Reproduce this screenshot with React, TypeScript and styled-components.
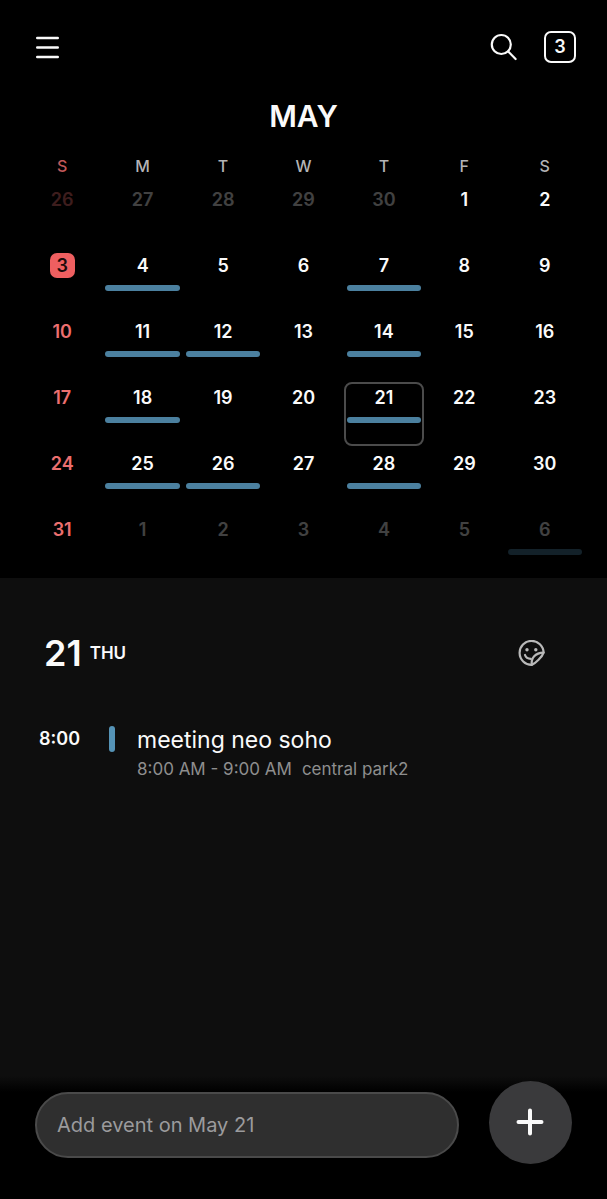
import React, { useState } from "react";
import styled, { createGlobalStyle } from "styled-components";

const GlobalStyle = createGlobalStyle`
  *, *::before, *::after { box-sizing: border-box; }
  html, body { margin: 0; padding: 0; background: #000; }
  body, button, input {
    font-family: Inter, "Liberation Sans", sans-serif;
  }
  button { margin: 0; padding: 0; border: 0; background: none; color: inherit; cursor: pointer; }
`;

const Page = styled.div`
  display: flex;
  flex-direction: column;
  min-height: 100vh;
  background: #000;
  color: #fafafa;
`;

const TopBar = styled.header`
  display: flex;
  align-items: center;
  justify-content: space-between;
  height: 94px;
  padding: 0 31px 0 36px;
`;

const Actions = styled.div`
  display: flex;
  align-items: center;
  gap: 26px;
`;

const IconButton = styled.button`
  display: flex;
  align-items: center;
  justify-content: center;
  color: ${(p) => p.color || "#fafafa"};
`;

const TodayButton = styled.button`
  width: 32px;
  height: 32px;
  border: 2px solid #fafafa;
  border-radius: 7px;
  font-size: 18px;
  line-height: 28px;
  font-weight: 600;
  text-align: center;
`;

const MonthTitle = styled.h1`
  margin: 0;
  height: 60px;
  font-size: 30px;
  line-height: 44px;
  font-weight: 600;
  text-align: center;
`;

const CalendarArea = styled.section`
  padding: 0 22px;
`;

const Calendar = styled.table`
  width: 100%;
  table-layout: fixed;
  border-collapse: collapse;
`;

const Weekday = styled.th<{ $sunday?: boolean }>`
  height: 30px;
  padding: 0;
  vertical-align: top;
  font-size: 16px;
  line-height: 24px;
  font-weight: 500;
  color: ${(p) => (p.$sunday ? "#c2595a" : "#b4b4b6")};
`;

const DayCell = styled.td`
  height: 66px;
  padding: 0;
  vertical-align: top;

  tr:last-child > & { height: 64px; }
`;

const DayButton = styled.button<{ $selected: boolean; $outside: boolean }>`
  display: flex;
  flex-direction: column;
  align-items: stretch;
  width: 100%;
  height: 64px;
  padding: 1px;
  border: 2px solid ${(p) => (p.$selected ? "#4b4b4b" : "transparent")};
  border-radius: 8px;
  opacity: ${(p) => (p.$outside ? 0.26 : 1)};
`;

const DayNumber = styled.span<{ $sunday: boolean; $today: boolean }>`
  align-self: center;
  width: 25px;
  height: 25px;
  border-radius: 7px;
  font-size: 18px;
  line-height: 25px;
  font-weight: 600;
  text-align: center;
  color: ${(p) => (p.$today ? "#1c0a0a" : p.$sunday ? "#ec6f6f" : "#fafafa")};
  background: ${(p) => (p.$today ? "#ee5f60" : "transparent")};
`;

const EventBar = styled.span`
  height: 6px;
  margin-top: 7px;
  border-radius: 3px;
  background: #4b809f;
`;

const Agenda = styled.main`
  flex: 1;
  padding: 50px 62px 24px 39px;
  background: #0e0e0e;
`;

const AgendaHeader = styled.div`
  display: flex;
  align-items: center;
  justify-content: space-between;
  height: 50px;
  padding-left: 5px;
`;

const AgendaDate = styled.h2`
  display: flex;
  align-items: center;
  gap: 8px;
  margin: 0;
  font-size: 36px;
  line-height: 50px;
  font-weight: 600;
`;

const AgendaWeekday = styled.span`
  font-size: 17px;
`;

const EventRow = styled.article`
  display: flex;
  align-items: flex-start;
  margin-top: 47px;
`;

const EventTime = styled.time`
  width: 70px;
  font-size: 18px;
  line-height: 28px;
  font-weight: 600;
`;

const EventMarker = styled.span`
  width: 6px;
  height: 26px;
  margin: 1px 22px 0 0;
  border-radius: 3px;
  background: #5593b6;
`;

const EventName = styled.h3`
  margin: 0;
  font-size: 23px;
  line-height: 30px;
  font-weight: 400;
`;

const EventDetail = styled.p`
  display: flex;
  gap: 10px;
  margin: 0;
  font-size: 17px;
  line-height: 28px;
  color: #8e8e8e;
`;

const BottomBar = styled.form`
  display: flex;
  align-items: flex-end;
  gap: 30px;
  padding: 5px 35px;
  padding-bottom: 35px;
  background: linear-gradient(#0e0e0e, #000 16px);
`;

const EventInput = styled.input`
  flex: 1;
  min-width: 0;
  height: 66px;
  margin: 0 0 6px;
  padding: 0 20px;
  border: 2px solid #4a4a4a;
  border-radius: 33px;
  outline: none;
  background: #2f2f2f;
  font-size: 20px;
  color: #fafafa;

  &::placeholder { color: #9b9b9d; opacity: 1; }
`;

const AddButton = styled.button`
  display: flex;
  align-items: center;
  justify-content: center;
  flex: none;
  width: 83px;
  height: 83px;
  border-radius: 50%;
  background: #3a3a3c;
`;

const MenuIcon = () => (
  <svg width="23" height="24" viewBox="0 0 23 24" fill="none" stroke="currentColor" strokeWidth="2.4" strokeLinecap="round">
    <path d="M1.2 3H21.8M1.2 12.5H21.8M1.2 22H21.8" />
  </svg>
);

const SearchIcon = () => (
  <svg width="28" height="28" viewBox="0 0 28 28" fill="none" stroke="currentColor" strokeWidth="2.2" strokeLinecap="round">
    <circle cx="11.3" cy="11.5" r="9.5" />
    <path d="M18.2 18.4L25.6 26" />
  </svg>
);

const StickerIcon = () => (
  <svg width="27" height="27" viewBox="0 0 27 27" fill="none" stroke="currentColor" strokeWidth="2.2" strokeLinecap="round" strokeLinejoin="round">
    <path d="M25.6 12.6A12 12 0 1 0 13.7 24.9C17.5 23.6 24.2 16.8 25.6 12.6Z" />
    <path d="M13.7 24.9C13 18 17 12.8 25.6 12.6" />
    <path d="M7 15C7.8 17.4 10 18.8 12.8 18.8" />
    <circle cx="9" cy="9.8" r="1.7" fill="currentColor" stroke="none" />
    <circle cx="17.8" cy="9.8" r="1.7" fill="currentColor" stroke="none" />
  </svg>
);

const PlusIcon = () => (
  <svg width="29" height="29" viewBox="0 0 29 29" fill="none" stroke="currentColor" strokeWidth="4" strokeLinecap="round">
    <path d="M14 2.5V25.5M2.5 14H25.5" />
  </svg>
);

const WEEKDAYS = [
  ["S", "Sunday"],
  ["M", "Monday"],
  ["T", "Tuesday"],
  ["W", "Wednesday"],
  ["T", "Thursday"],
  ["F", "Friday"],
  ["S", "Saturday"],
];

const LEADING_DAYS = 5;
const DAYS_IN_APRIL = 30;
const DAYS_IN_MAY = 31;
const TODAY = 3;
const EVENT_OFFSETS = [4, 7, 11, 12, 14, 18, 21, 25, 26, 28, 37];

const weeks = Array.from({ length: 6 }, (_, week) =>
  Array.from({ length: 7 }, (_, column) => {
    const offset = week * 7 + column - LEADING_DAYS + 1;
    const outside = offset < 1 || offset > DAYS_IN_MAY;
    const day = offset < 1 ? offset + DAYS_IN_APRIL : offset > DAYS_IN_MAY ? offset - DAYS_IN_MAY : offset;
    return { offset, day, outside, hasEvent: EVENT_OFFSETS.includes(offset) };
  })
);

export default function App() {
  const [selected, setSelected] = useState(21);

  return (
    <Page>
      <GlobalStyle />
      <TopBar>
        <IconButton type="button" aria-label="Menu">
          <MenuIcon />
        </IconButton>
        <Actions>
          <IconButton type="button" aria-label="Search">
            <SearchIcon />
          </IconButton>
          <TodayButton type="button">{TODAY}</TodayButton>
        </Actions>
      </TopBar>
      <MonthTitle>MAY</MonthTitle>
      <CalendarArea>
        <Calendar>
          <thead>
            <tr>
              {WEEKDAYS.map(([letter, name], i) => (
                <Weekday key={name} scope="col" abbr={name} $sunday={i === 0}>
                  {letter}
                </Weekday>
              ))}
            </tr>
          </thead>
          <tbody>
            {weeks.map((week, w) => (
              <tr key={w}>
                {week.map((d, column) => (
                  <DayCell key={d.offset}>
                    <DayButton
                      type="button"
                      $selected={d.offset === selected}
                      $outside={d.outside}
                      onClick={() => setSelected(d.offset)}
                    >
                      <DayNumber $sunday={column === 0} $today={d.offset === TODAY}>
                        {d.day}
                      </DayNumber>
                      {d.hasEvent && <EventBar />}
                    </DayButton>
                  </DayCell>
                ))}
              </tr>
            ))}
          </tbody>
        </Calendar>
      </CalendarArea>
      <Agenda>
        <AgendaHeader>
          <AgendaDate>
            21 <AgendaWeekday>THU</AgendaWeekday>
          </AgendaDate>
          <IconButton type="button" aria-label="Stickers" color="#b9b9b9">
            <StickerIcon />
          </IconButton>
        </AgendaHeader>
        <EventRow>
          <EventTime>8:00</EventTime>
          <EventMarker />
          <div>
            <EventName>meeting neo soho</EventName>
            <EventDetail>
              <span>8:00 AM - 9:00 AM</span>
              <span>central park2</span>
            </EventDetail>
          </div>
        </EventRow>
      </Agenda>
      <BottomBar onSubmit={(e) => e.preventDefault()}>
        <EventInput type="text" aria-label="Event title" placeholder="Add event on May 21" />
        <AddButton type="submit" aria-label="Add event">
          <PlusIcon />
        </AddButton>
      </BottomBar>
    </Page>
  );
}
